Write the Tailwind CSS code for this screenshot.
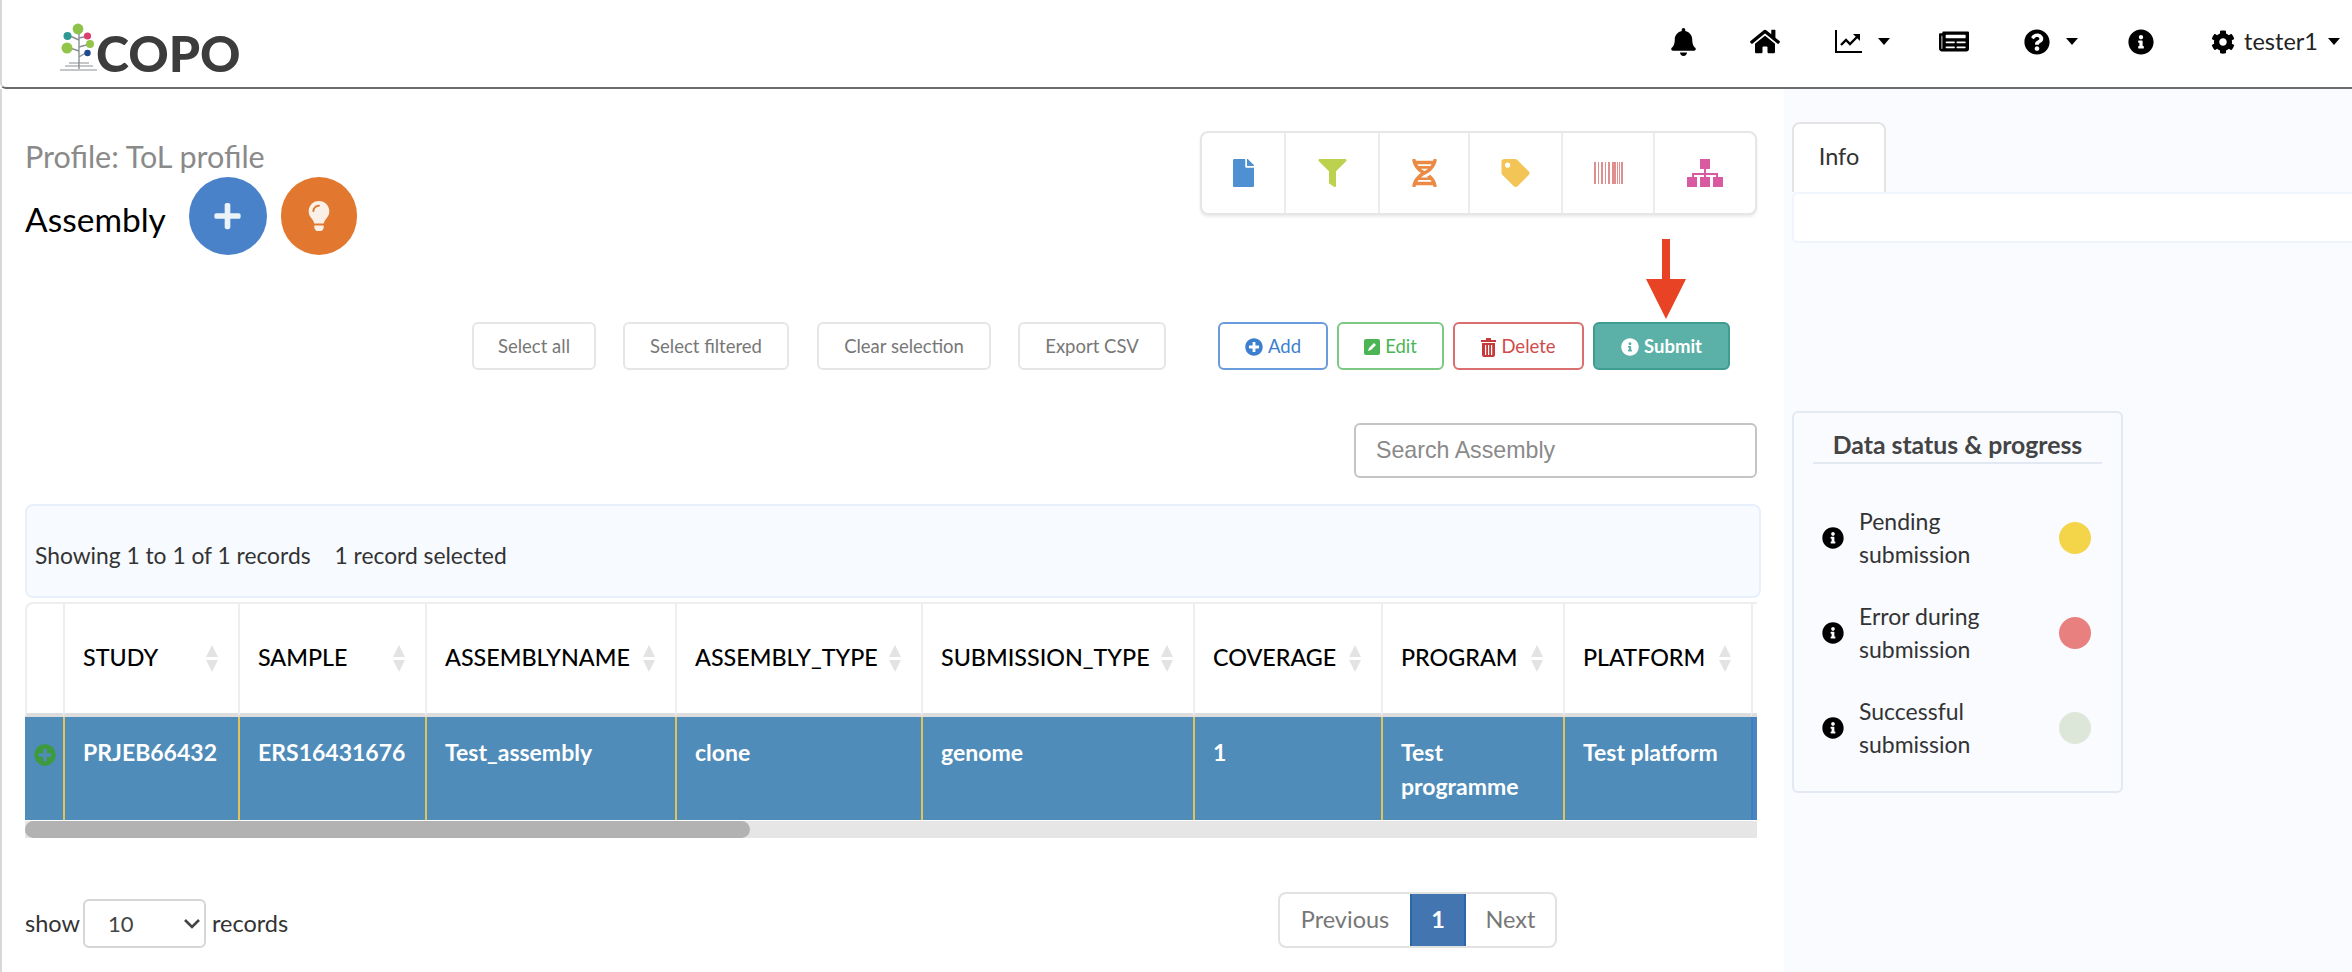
<!DOCTYPE html>
<html lang="en">
<head>
<meta charset="UTF-8" />
<title>COPO - Assembly</title>
<script src="https://cdn.jsdelivr.net/npm/@tailwindcss/browser@4"></script>
</head>
<body class="bg-white font-['Lato','Open_Sans',sans-serif] text-[#333] overflow-hidden h-[972px]">
<svg class="hidden">
  <symbol id="i-info" viewBox="0 0 512 512"><path d="M256 8C119.043 8 8 119.083 8 256c0 136.997 111.043 248 248 248s248-111.003 248-248C504 119.083 392.957 8 256 8zm0 110c23.196 0 42 18.804 42 42s-18.804 42-42 42-42-18.804-42-42 18.804-42 42-42zm56 254c0 6.627-5.373 12-12 12h-88c-6.627 0-12-5.373-12-12v-24c0-6.627 5.373-12 12-12h12v-64h-12c-6.627 0-12-5.373-12-12v-24c0-6.627 5.373-12 12-12h64c6.627 0 12 5.373 12 12v100h12c6.627 0 12 5.373 12 12v24z"/></symbol>
  <symbol id="i-sort" viewBox="0 0 14 28"><path d="M7 0l6 12H1z" fill="#e3e3e3"/><path d="M1 15h12L7 27z" fill="#e3e3e3"/></symbol>
  <symbol id="i-caret" viewBox="0 0 12 7"><path d="M0 0h12L6 7z"/></symbol>
</svg>

<!-- navbar -->
<header class="h-[89px] border-b-2 border-l-2 border-[#6b6b6b] border-l-[#d8d8d8] rounded-bl-md flex items-center justify-between">
  <a class="flex items-end ml-[57px] mt-[6px] h-[48px]">
    <svg class="w-[40px] h-[48px] mr-[-3px]" viewBox="0 0 40 48">
      <g stroke="#8a8f94" fill="none" stroke-width="1.4">
        <path d="M20 8v38M20 17l-9-4M20 15l9-2M20 28l-12-4M20 24l11-3M20 34l8-5"/>
        <path d="M1 47h37M6 43h28M10 40h20" stroke-width="1"/>
      </g>
      <circle cx="19" cy="6" r="5.4" fill="#8fc24a"/>
      <circle cx="8.5" cy="13" r="4" fill="#2f9a94"/>
      <circle cx="28.5" cy="13" r="3.6" fill="#d9406f"/>
      <circle cx="8" cy="25" r="5.5" fill="#93c54b"/>
      <circle cx="31" cy="21" r="4" fill="#93c54b"/>
      <circle cx="28.5" cy="30" r="3.2" fill="#1f4a8f"/>
    </svg>
    <span class="text-[50px] leading-[46px] font-black text-[#3c3c3c] mb-[-5px]">COPO</span>
  </a>
  <nav class="flex items-center text-black mr-[12px] mt-[-4px]">
    <svg class="w-[25px] h-[28px] mr-[54px]" viewBox="0 0 448 512"><path d="M224 512c35.32 0 63.97-28.65 63.97-64H160.03c0 35.35 28.65 64 63.97 64zm215.39-149.71c-19.32-20.76-55.47-51.99-55.47-154.29 0-77.7-54.48-139.9-127.94-155.16V32c0-17.67-14.32-32-31.98-32s-31.98 14.33-31.98 32v20.84C118.56 68.1 64.08 130.3 64.08 208c0 102.3-36.15 133.53-55.47 154.29-6 6.45-8.66 14.16-8.61 21.71.11 16.4 12.98 32 32.1 32h383.8c19.12 0 32-15.6 32.1-32 .05-7.55-2.61-15.27-8.61-21.71z"/></svg>
    <svg class="w-[30px] h-[27px] mr-[55px]" viewBox="0 0 576 512"><path d="M280.37 148.26L96 300.11V464a16 16 0 0 0 16 16l112.06-.29a16 16 0 0 0 15.92-16V368a16 16 0 0 1 16-16h64a16 16 0 0 1 16 16v95.64a16 16 0 0 0 16 16.05L464 480a16 16 0 0 0 16-16V300L295.67 148.26a12.19 12.19 0 0 0-15.3 0zM571.6 251.47L488 182.56V44.05a12 12 0 0 0-12-12h-56a12 12 0 0 0-12 12v72.61L318.47 43a48 48 0 0 0-61 0L4.34 251.47a12 12 0 0 0-1.6 16.9l25.5 31A12 12 0 0 0 45.15 301l235.22-193.74a12.19 12.19 0 0 1 15.3 0L530.9 301a12 12 0 0 0 16.9-1.6l25.5-31a12 12 0 0 0-1.7-16.93z"/></svg>
    <svg class="w-[27px] h-[23px] mr-[16px]" viewBox="0 0 27 23" fill="none" stroke="#000"><path d="M1 0v22h26" stroke-width="2"/><path d="M6 15l5-5 4 4 7-7" stroke-width="2.4"/><path d="M18 4h7v7z" fill="#000" stroke="none"/></svg>
    <svg class="w-[12px] h-[7px] mr-[49px]"><use href="#i-caret"/></svg>
    <svg class="w-[30px] h-[27px] mr-[55px]" viewBox="0 0 576 512"><path d="M552 64H88c-13.255 0-24 10.745-24 24v8H24c-13.255 0-24 10.745-24 24v272c0 30.928 25.072 56 56 56h472c26.51 0 48-21.49 48-48V88c0-13.255-10.745-24-24-24zM56 400a8 8 0 0 1-8-8V144h16v248a8 8 0 0 1-8 8zm236-16H140c-6.627 0-12-5.373-12-12v-8c0-6.627 5.373-12 12-12h152c6.627 0 12 5.373 12 12v8c0 6.627-5.373 12-12 12zm208 0H348c-6.627 0-12-5.373-12-12v-8c0-6.627 5.373-12 12-12h152c6.627 0 12 5.373 12 12v8c0 6.627-5.373 12-12 12zm-208-96H140c-6.627 0-12-5.373-12-12v-8c0-6.627 5.373-12 12-12h152c6.627 0 12 5.373 12 12v8c0 6.627-5.373 12-12 12zm208 0H348c-6.627 0-12-5.373-12-12v-8c0-6.627 5.373-12 12-12h152c6.627 0 12 5.373 12 12v8c0 6.627-5.373 12-12 12zm0-96H140c-6.627 0-12-5.373-12-12v-40c0-6.627 5.373-12 12-12h360c6.627 0 12 5.373 12 12v40c0 6.627-5.373 12-12 12z"/></svg>
    <svg class="w-[26px] h-[26px] mr-[16px]" viewBox="0 0 512 512"><path d="M504 256c0 136.997-111.043 248-248 248S8 392.997 8 256C8 119.083 119.043 8 256 8s248 111.083 248 248zM262.655 90c-54.497 0-89.255 22.957-116.549 63.758-3.536 5.286-2.353 12.415 2.715 16.258l34.699 26.31c5.205 3.947 12.621 3.008 16.665-2.122 17.864-22.658 30.113-35.797 57.303-35.797 20.429 0 45.698 13.148 45.698 32.958 0 14.976-12.363 22.667-32.534 33.976C247.128 238.528 216 254.941 216 296v4c0 6.627 5.373 12 12 12h56c6.627 0 12-5.373 12-12v-1.333c0-28.462 83.186-29.647 83.186-106.667 0-58.002-60.165-102-116.531-102zM256 338c-25.365 0-46 20.635-46 46 0 25.364 20.635 46 46 46s46-20.636 46-46c0-25.365-20.635-46-46-46z"/></svg>
    <svg class="w-[12px] h-[7px] mr-[50px]"><use href="#i-caret"/></svg>
    <svg class="w-[26px] h-[26px] mr-[57px]"><use href="#i-info"/></svg>
    <svg class="w-[24px] h-[26px] mr-[9px]" viewBox="0 0 512 512"><path d="M487.4 315.7l-42.6-24.6c4.3-23.2 4.3-47 0-70.2l42.6-24.6c4.9-2.8 7.1-8.6 5.5-14-11.1-35.6-30-67.8-54.7-94.6-3.8-4.1-10-5.1-14.8-2.3L380.8 110c-17.9-15.4-38.5-27.3-60.8-35.1V25.8c0-5.6-3.9-10.5-9.4-11.7-36.7-8.2-74.3-7.8-109.2 0-5.5 1.2-9.4 6.1-9.4 11.7V75c-22.2 7.9-42.8 19.8-60.8 35.1L88.7 85.5c-4.9-2.8-11-1.9-14.8 2.3-24.7 26.7-43.6 58.9-54.7 94.6-1.7 5.4.6 11.2 5.5 14L67.3 221c-4.3 23.2-4.3 47 0 70.2l-42.6 24.6c-4.9 2.8-7.1 8.6-5.5 14 11.1 35.6 30 67.8 54.7 94.6 3.8 4.1 10 5.1 14.8 2.3l42.6-24.6c17.9 15.4 38.5 27.3 60.8 35.1v49.2c0 5.6 3.9 10.5 9.4 11.7 36.7 8.2 74.3 7.8 109.2 0 5.5-1.2 9.4-6.1 9.4-11.7v-49.2c22.2-7.9 42.8-19.8 60.8-35.1l42.6 24.6c4.9 2.8 11 1.9 14.8-2.3 24.7-26.7 43.6-58.9 54.7-94.6 1.5-5.5-.7-11.3-5.6-14.1zM256 336c-44.1 0-80-35.9-80-80s35.9-80 80-80 80 35.9 80 80-35.9 80-80 80z"/></svg>
    <span class="text-[23.5px] text-[#222] mr-[10px]">tester1</span>
    <svg class="w-[12px] h-[7px]"><use href="#i-caret"/></svg>
  </nav>
</header>

<div class="flex h-[883px]">
  <!-- main column -->
  <main class="w-[1784px] shrink-0 border-l-2 border-[#d8d8d8] pl-[23px] pr-[27px]">
    <div class="flex justify-between items-start pt-[42px] h-[233px]">
      <div>
        <div class="text-[30.5px] leading-[36px] text-[#8a8a8a] mt-[7px]">Profile: ToL profile</div>
        <div class="flex items-center mt-[3px]">
          <h1 class="text-[33.5px] leading-[40px] text-black mt-[5px] w-[163.5px]">Assembly</h1>
          <span class="w-[78px] h-[78px] rounded-full bg-[#4a82ca] flex items-center justify-center">
            <svg class="w-[27px] h-[30px]" viewBox="0 0 448 512" fill="#eaf2fa"><path d="M416 208H272V64c0-17.67-14.33-32-32-32h-32c-17.67 0-32 14.33-32 32v144H32c-17.67 0-32 14.33-32 32v32c0 17.67 14.33 32 32 32h144v144c0 17.67 14.33 32 32 32h32c17.67 0 32-14.33 32-32V304h144c17.67 0 32-14.33 32-32v-32c0-17.67-14.33-32-32-32z"/></svg>
          </span>
          <span class="w-[76px] h-[78px] ml-[14px] rounded-full bg-[#e27830] flex items-center justify-center">
            <svg class="w-[22px] h-[30px]" viewBox="0 0 352 512" fill="#fbf0e8"><path d="M96.06 454.35c.01 6.29 1.87 12.45 5.36 17.69l17.09 25.69a31.99 31.99 0 0 0 26.64 14.28h61.71a31.99 31.99 0 0 0 26.64-14.28l17.09-25.69a31.989 31.989 0 0 0 5.36-17.69l.04-38.35H96.01l.05 38.35zM0 176c0 44.37 16.45 84.85 43.56 115.78 16.52 18.85 42.36 58.23 52.21 91.45.04.26.07.52.11.78h160.24c.04-.26.07-.51.11-.78 9.85-33.22 35.69-72.6 52.21-91.45C335.55 260.85 352 220.37 352 176 352 78.61 272.91-.3 175.45 0 73.44.31 0 82.97 0 176zm176-80c-44.11 0-80 35.89-80 80 0 8.84-7.16 16-16 16s-16-7.16-16-16c0-61.76 50.24-112 112-112 8.84 0 16 7.16 16 16s-7.16 16-16 16z"/></svg>
          </span>
        </div>
      </div>
      <!-- component toolbar -->
      <div class="flex h-[84px] w-[557px] border-2 border-[#e6e6e6] rounded-lg shadow-[0_2px_3px_rgba(0,0,0,0.08)] bg-white divide-x-2 divide-[#ececec]">
        <div class="w-[84px] flex items-center justify-center"><svg class="w-[21px] h-[28px]" viewBox="0 0 384 512" fill="#4f90d2"><path d="M224 136V0H24C10.7 0 0 10.7 0 24v464c0 13.3 10.7 24 24 24h336c13.3 0 24-10.7 24-24V160H248c-13.2 0-24-10.8-24-24zm160-14.1v6.1H256V0h6.1c6.4 0 12.5 2.5 17 7l97.9 98c4.5 4.5 7 10.6 7 16.9z"/></svg></div>
        <div class="w-[94px] flex items-center justify-center"><svg class="w-[29px] h-[28px]" viewBox="0 0 512 512" fill="#bcd24f"><path d="M487.976 0H24.028C2.71 0-8.047 25.866 7.058 40.971L192 225.941V432c0 7.831 3.821 15.17 10.237 19.662l80 55.98C298.02 518.69 320 507.493 320 487.98V225.941l184.947-184.97C520.021 25.896 509.338 0 487.976 0z"/></svg></div>
        <div class="w-[90px] flex items-center justify-center"><svg class="w-[25px] h-[28px]" viewBox="0 0 448 512" fill="#ea8a45"><path d="M.1 494.1c-1.1 9.5 6.3 17.8 15.9 17.8l32.3.1c8.1 0 14.9-5.9 16-13.9.7-4.9 1.8-11.1 3.4-18.1H380c1.6 6.9 2.7 13.1 3.4 18.1 1.1 8 7.9 14 16 13.9l32.3-.1c9.6 0 17.1-8.3 15.9-17.8-4.6-37.9-25.6-129-118.9-207.7-17.6 12.4-37.1 24.2-58.5 35.4 6.2 4.6 11.4 9.4 17 14.2H159.7c21.3-18.1 47-35.6 78.7-51.4C410.5 199.1 442.1 65.8 447.9 17.9 449 8.4 441.6.1 432 .1L399.6 0c-8.1 0-14.9 5.9-16 13.9-.7 4.9-1.8 11.1-3.4 18.1H67.8c-1.6-7-2.7-13.1-3.4-18.1-1.1-8-7.9-14-16-13.9L16.1.1C6.5.1-1 8.4.1 17.9 5.3 60.8 31.4 171.8 160 256 31.5 340.2 5.3 451.2.1 494.1zM224 219.6c-25.1-13.7-46.4-28.4-64.3-43.6h128.5c-17.8 15.2-39.1 29.9-64.2 43.6zM355.1 96c-5.8 10.4-12.8 21.1-21 32H114c-8.3-10.9-15.3-21.6-21-32h262.1zM92.9 416c5.8-10.4 12.8-21.1 21-32h219.4c8.3 10.9 15.4 21.6 21.2 32H92.9z"/></svg></div>
        <div class="w-[93px] flex items-center justify-center"><svg class="w-[29px] h-[28px]" viewBox="0 0 512 512" fill="#f2c556"><path d="M0 252.118V48C0 21.49 21.49 0 48 0h204.118a48 48 0 0 1 33.941 14.059l211.882 211.882c18.745 18.745 18.745 49.137 0 67.882L293.823 497.941c-18.745 18.745-49.137 18.745-67.882 0L14.059 286.059A48 48 0 0 1 0 252.118zM112 64c-26.51 0-48 21.49-48 48s21.49 48 48 48 48-21.49 48-48-21.49-48-48-48z"/></svg></div>
        <div class="w-[92px] flex items-center justify-center"><svg class="w-[29px] h-[22px]" viewBox="0 0 29 22" fill="#e08f8f"><path d="M0 0h2v22H0zM4 0h1v22H4zM7 0h2v22H7zM11 0h1v22h-1zM14 0h2v22h-2zM18 0h4v22h-4zM23 0h1v22h-1zM25 0h1v22h-1zM27 0h2v22h-2z"/></svg></div>
        <div class="flex-1 flex items-center justify-center"><svg class="w-[36px] h-[28px]" viewBox="0 0 36 28" fill="#d85aa0"><path d="M13 0h10v10H13zM0 18h10v10H0zM13 18h10v10H13zM26 18h10v10H26z"/><path d="M17 10h2v4h12v4h-2v-2H19v2h-2v-2H7v2H5v-4h12z"/></svg></div>
      </div>
    </div>

    <!-- action buttons, arrow sits over them -->
    <div class="relative flex items-center h-[48px] text-[18.5px] pl-[447px]">
      <svg class="absolute left-[1621px] top-[-83px] w-[40px] h-[80px]" viewBox="0 0 40 80" fill="#e94326"><path d="M16 0h8v40h-8z"/><path d="M0 40h40L20 80z"/></svg>
      <button class="w-[124px] h-[48px] pt-[2px] border-2 border-[#e6e6e6] rounded-md text-[#777]">Select all</button>
      <button class="w-[166px] h-[48px] pt-[2px] ml-[27px] border-2 border-[#e6e6e6] rounded-md text-[#777]">Select filtered</button>
      <button class="w-[174px] h-[48px] pt-[2px] ml-[28px] border-2 border-[#e6e6e6] rounded-md text-[#777]">Clear selection</button>
      <button class="w-[148px] h-[48px] pt-[2px] ml-[27px] border-2 border-[#e6e6e6] rounded-md text-[#777]">Export CSV</button>
      <button class="w-[110px] h-[48px] pt-[2px] ml-[52px] border-2 border-[#6a9bdc] rounded-md text-[#3d7fcf] flex items-center justify-center gap-[5px]">
        <svg class="w-[18px] h-[18px]" viewBox="0 0 512 512" fill="#3d7fcf"><path d="M256 8C119 8 8 119 8 256s111 248 248 248 248-111 248-248S393 8 256 8zm144 276c0 6.6-5.4 12-12 12h-92v92c0 6.6-5.4 12-12 12h-56c-6.6 0-12-5.4-12-12v-92h-92c-6.6 0-12-5.4-12-12v-56c0-6.6 5.4-12 12-12h92v-92c0-6.6 5.4-12 12-12h56c6.6 0 12 5.4 12 12v92h92c6.6 0 12 5.4 12 12v56z"/></svg>Add</button>
      <button class="w-[107px] h-[48px] pt-[2px] ml-[9px] border-2 border-[#7cc983] rounded-md text-[#4bb454] flex items-center justify-center gap-[5px]">
        <svg class="w-[16px] h-[16px]" viewBox="0 0 16 16"><rect width="16" height="16" rx="2" fill="#4bb454"/><path d="M4 12l1-3 5-5 2 2-5 5z" fill="#fff"/></svg>Edit</button>
      <button class="w-[131px] h-[48px] pt-[2px] ml-[9px] border-2 border-[#d96f6f] rounded-md text-[#cf4b4b] flex items-center justify-center gap-[5px]">
        <svg class="w-[15px] h-[19px]" viewBox="0 0 15 19"><path d="M0 2h5V0h5v2h5v2H0zM1 5h13v12a2 2 0 0 1-2 2H3a2 2 0 0 1-2-2z" fill="#c73a3a"/><path d="M4 7h1.2v10H4zM7 7h1.2v10H7zM10 7h1.2v10H10z" fill="#fff"/></svg>Delete</button>
      <button class="w-[137px] h-[48px] pt-[2px] ml-[9px] border-2 border-[#3f9c90] rounded-md bg-[#5bb1a7] text-white font-bold flex items-center justify-center gap-[5px]">
        <svg class="w-[18px] h-[18px]" fill="#fff"><use href="#i-info"/></svg>Submit</button>
    </div>

    <div class="flex justify-end mt-[53px]">
      <input placeholder="Search Assembly" class="w-[403px] h-[55px] border-2 border-[#c4c4c4] rounded-md px-[20px] text-[23.2px] font-['Liberation_Sans',sans-serif] bg-white placeholder:text-[#8a8a8a]" />
    </div>

    <!-- records bar -->
    <div class="mt-[26px] w-[1736px] h-[94px] bg-[#f7faff] border-2 border-[#e8f0fb] rounded-lg flex items-center pl-[8px] pt-[8px] text-[22.8px] text-[#333]">
      <span>Showing 1 to 1 of 1 records</span><span class="ml-[24px]">1 record selected</span>
    </div>

    <!-- table, wider than its box -->
    <div class="mt-[4px] w-[1732px] h-[236px] overflow-hidden relative">
      <table class="table-fixed border-separate border-spacing-0 w-[1800px] text-[23.3px]">
        <colgroup><col class="w-[38px]"/><col class="w-[175px]"/><col class="w-[187px]"/><col class="w-[250px]"/><col class="w-[246px]"/><col class="w-[272px]"/><col class="w-[188px]"/><col class="w-[182px]"/><col class="w-[188px]"/><col/></colgroup>
        <thead>
          <tr class="h-[115px] text-black">
            <th class="border-2 border-[#eee] border-b-4 border-b-[#ddd] border-r-0 rounded-tl-lg"></th>
            <th class="border-l-2 border-t-2 border-[#eee] border-b-4 border-b-[#ddd] pl-[18px] text-left font-medium"><div class="flex items-center justify-between pr-[19px]"><span class="mt-[-3px]">STUDY</span><svg class="w-[14px] h-[28px]"><use href="#i-sort"/></svg></div></th>
            <th class="border-l-2 border-t-2 border-[#eee] border-b-4 border-b-[#ddd] pl-[18px] text-left font-medium"><div class="flex items-center justify-between pr-[19px]"><span class="mt-[-3px]">SAMPLE</span><svg class="w-[14px] h-[28px]"><use href="#i-sort"/></svg></div></th>
            <th class="border-l-2 border-t-2 border-[#eee] border-b-4 border-b-[#ddd] pl-[18px] text-left font-medium"><div class="flex items-center justify-between pr-[19px]"><span class="mt-[-3px]">ASSEMBLYNAME</span><svg class="w-[14px] h-[28px]"><use href="#i-sort"/></svg></div></th>
            <th class="border-l-2 border-t-2 border-[#eee] border-b-4 border-b-[#ddd] pl-[18px] text-left font-medium"><div class="flex items-center justify-between pr-[19px]"><span class="mt-[-3px]">ASSEMBLY_TYPE</span><svg class="w-[14px] h-[28px]"><use href="#i-sort"/></svg></div></th>
            <th class="border-l-2 border-t-2 border-[#eee] border-b-4 border-b-[#ddd] pl-[18px] text-left font-medium"><div class="flex items-center justify-between pr-[19px]"><span class="mt-[-3px]">SUBMISSION_TYPE</span><svg class="w-[14px] h-[28px]"><use href="#i-sort"/></svg></div></th>
            <th class="border-l-2 border-t-2 border-[#eee] border-b-4 border-b-[#ddd] pl-[18px] text-left font-medium"><div class="flex items-center justify-between pr-[19px]"><span class="mt-[-3px]">COVERAGE</span><svg class="w-[14px] h-[28px]"><use href="#i-sort"/></svg></div></th>
            <th class="border-l-2 border-t-2 border-[#eee] border-b-4 border-b-[#ddd] pl-[18px] text-left font-medium"><div class="flex items-center justify-between pr-[19px]"><span class="mt-[-3px]">PROGRAM</span><svg class="w-[14px] h-[28px]"><use href="#i-sort"/></svg></div></th>
            <th class="border-l-2 border-t-2 border-[#eee] border-b-4 border-b-[#ddd] pl-[18px] text-left font-medium"><div class="flex items-center justify-between pr-[19px]"><span class="mt-[-3px]">PLATFORM</span><svg class="w-[14px] h-[28px]"><use href="#i-sort"/></svg></div></th>
            <th class="border-l-2 border-t-2 border-[#eee] border-b-4 border-b-[#ddd]"></th>
          </tr>
        </thead>
        <tbody>
          <tr class="h-[103px] bg-[#4f8cb9] text-white font-bold align-top text-[23px]">
            <td class="pl-[9px] pt-[27px]"><svg class="w-[22px] h-[22px]" viewBox="0 0 512 512" fill="#3d9a3d"><path d="M256 8C119 8 8 119 8 256s111 248 248 248 248-111 248-248S393 8 256 8zm144 276c0 6.6-5.4 12-12 12h-92v92c0 6.6-5.4 12-12 12h-56c-6.6 0-12-5.4-12-12v-92h-92c-6.6 0-12-5.4-12-12v-56c0-6.6 5.4-12 12-12h92v-92c0-6.6 5.4-12 12-12h56c6.6 0 12 5.4 12 12v92h92c6.6 0 12 5.4 12 12v56z"/></svg></td>
            <td class="border-l-2 border-[#e2c35a] pl-[18px] pt-[18px] leading-[34px]">PRJEB66432</td>
            <td class="border-l-2 border-[#e2c35a] pl-[18px] pt-[18px] leading-[34px]">ERS16431676</td>
            <td class="border-l-2 border-[#e2c35a] pl-[18px] pt-[18px] leading-[34px]">Test_assembly</td>
            <td class="border-l-2 border-[#e2c35a] pl-[18px] pt-[18px] leading-[34px]">clone</td>
            <td class="border-l-2 border-[#e2c35a] pl-[18px] pt-[18px] leading-[34px]">genome</td>
            <td class="border-l-2 border-[#e2c35a] pl-[18px] pt-[18px] leading-[34px]">1</td>
            <td class="border-l-2 border-[#e2c35a] pl-[18px] pt-[18px] leading-[34px]">Test<br/>programme</td>
            <td class="border-l-2 border-[#e2c35a] pl-[18px] pt-[18px] leading-[34px]">Test platform</td>
            <td class="border-l-2 border-[#3f7fc0] bg-[#4a84c2]"></td>
          </tr>
        </tbody>
      </table>
      <div class="absolute left-0 right-0 bottom-0 h-[17px] bg-[#e6e6e6]"><div class="w-[725px] h-[17px] rounded-full bg-[#b2b2b2]"></div></div>
    </div>

    <!-- footer -->
    <div class="flex items-start justify-between w-[1732px] mt-[54px] text-[23.5px]">
      <div class="flex items-center h-[49px] mt-[7px]">
        <span class="mr-[3px]">show</span>
        <div class="w-[123px] h-[49px] border-2 border-[#d6d6d6] rounded-md pl-[23px] flex items-center justify-between pr-[4px] text-[#444] text-[22px]">10<svg class="w-[16px] h-[10px]" viewBox="0 0 16 10" fill="none" stroke="#444" stroke-width="2.6"><path d="M1 1l7 7 7-7"/></svg></div>
        <span class="ml-[6px]">records</span>
      </div>
      <div class="flex h-[56px] w-[279px] border-2 border-[#e2e2e2] rounded-lg mr-[200px] text-[#777] items-stretch overflow-hidden">
        <span class="w-[130px] flex items-center justify-center">Previous</span>
        <span class="w-[56px] bg-[#4375b0] border-2 border-[#2a66a8] my-[-2px] text-white font-bold flex items-center justify-center">1</span>
        <span class="flex-1 flex items-center justify-center">Next</span>
      </div>
    </div>
  </main>

  <!-- right info column -->
  <aside class="flex-1 bg-[#f9fbff] pt-[33px] pl-[8px]">
    <div class="w-[94px] h-[70px] bg-white border-2 border-b-0 border-[#e4e4e4] rounded-t-lg flex items-center justify-center pb-[2px] text-[23.5px] text-[#333]">Info</div>
    <div class="h-[51px] bg-white border-2 border-r-0 border-[#f0f4fc] rounded-l-md"></div>
    <section class="mt-[168px] w-[331px] h-[382px] border-2 border-[#e3e9f2] rounded-md px-[19px] pt-[17px]">
      <h2 class="text-center font-bold text-[24.8px] leading-[30px] text-[#444] border-b-2 border-[#e3e9f2] pb-[2px]">Data status &amp; progress</h2>
      <div class="mt-[41px] flex flex-col gap-[29px] pl-[9px] pr-[11px] text-[23px] leading-[33px] text-[#333]">
        <div class="flex items-center"><svg class="w-[22px] h-[22px] shrink-0"><use href="#i-info"/></svg><span class="ml-[15px] w-[156px]">Pending submission</span><span class="ml-auto w-[32px] h-[32px] rounded-full bg-[#f4d54a]"></span></div>
        <div class="flex items-center"><svg class="w-[22px] h-[22px] shrink-0"><use href="#i-info"/></svg><span class="ml-[15px] w-[156px]">Error during submission</span><span class="ml-auto w-[32px] h-[32px] rounded-full bg-[#e88080]"></span></div>
        <div class="flex items-center"><svg class="w-[22px] h-[22px] shrink-0"><use href="#i-info"/></svg><span class="ml-[15px] w-[156px]">Successful submission</span><span class="ml-auto w-[32px] h-[32px] rounded-full bg-[#dce7da]"></span></div>
      </div>
    </section>
  </aside>
</div>
</body>
</html>
